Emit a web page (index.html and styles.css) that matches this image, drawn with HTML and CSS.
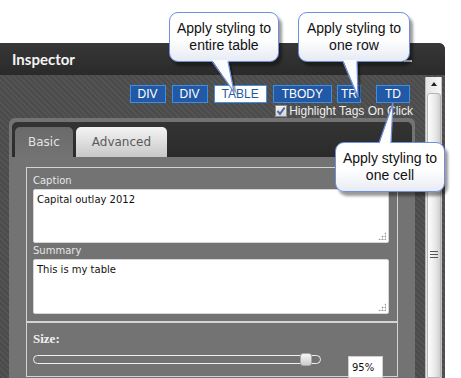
FILE: index.html
```html
<!DOCTYPE html>
<html lang="en">
<head>
  <meta charset="UTF-8">
  <meta name="viewport" content="width=device-width, initial-scale=1.0">
  <title>Inspector</title>
  <link rel="stylesheet" href="styles.css">
</head>
<body>
  <div class="window">
    <!-- Title bar -->
    <div class="window-header">
      <h1>Inspector</h1>
      <span class="minimize"></span>
    </div>

    <div class="window-body">
      <div class="main">
        <!-- Tag path -->
        <div class="tag-path">
          <button class="tag">DIV</button>
          <button class="tag">DIV</button>
          <button class="tag selected">TABLE</button>
          <button class="tag tbody">TBODY</button>
          <button class="tag tr">TR</button>
          <button class="tag td">TD</button>
        </div>
        <label class="highlight-option">
          <span class="checkbox">
            <svg width="10" height="10" viewBox="0 0 10 10"><path d="M1.5 5 L4 7.8 L8.6 1.6" fill="none" stroke="#4b6ca6" stroke-width="2"/></svg>
          </span>
          Highlight Tags On Click
        </label>

        <!-- Tabs panel -->
        <div class="panel">
          <div class="tabs">
            <span class="tab active">Basic</span>
            <span class="tab advanced">Advanced</span>
          </div>
          <div class="tab-content">
            <div class="section">
              <label class="field-label">Caption</label>
              <div class="field">
                <textarea class="caption">Capital outlay 2012</textarea>
                <span class="grip-dots"></span>
              </div>
              <label class="field-label spaced">Summary</label>
              <div class="field">
                <textarea class="summary">This is my table</textarea>
                <span class="grip-dots"></span>
              </div>
            </div>
            <div class="section size-section">
              <h3>Size:</h3>
              <div class="slider-row">
                <div class="slider"><span class="handle"></span></div>
                <input class="size-input" type="text" value="95%">
              </div>
            </div>
          </div>
        </div>
      </div>

      <!-- Scrollbar -->
      <div class="scrollbar">
        <div class="scroll-up"><span class="arrow"></span></div>
        <div class="scroll-thumb"><span class="grip"></span></div>
      </div>
    </div>
  </div>

  <!-- Callouts -->
  <div class="callout callout-table">Apply styling to<br>entire table</div>
  <svg class="tail tail-table" width="40" height="45" viewBox="205 55 40 45">
    <polygon points="215,64 231,64 237,95" fill="rgba(0,0,0,0.35)"/>
    <polygon points="212,60 228,60 234,92" fill="#fafbfd"/>
    <polyline points="212,61.5 234,92 228,61.5" fill="none" stroke="#6f8fdc" stroke-width="1.2"/>
  </svg>

  <div class="callout callout-row">Apply styling to<br>one row</div>
  <svg class="tail tail-row" width="30" height="45" viewBox="335 55 30 45">
    <polygon points="346,64 360,64 361,100" fill="rgba(0,0,0,0.35)"/>
    <polygon points="343,60 357,60 358,97" fill="#fafbfd"/>
    <polyline points="343,61.5 358,97 357,61.5" fill="none" stroke="#6f8fdc" stroke-width="1.2"/>
  </svg>

  <div class="callout callout-cell">Apply styling to<br>one cell</div>
  <svg class="tail tail-cell" width="25" height="45" viewBox="372 100 25 45">
    <polygon points="379,144 391,144 393,103" fill="#fdfdfe"/>
    <polyline points="379,143 393,103 391,143" fill="none" stroke="#6f8fdc" stroke-width="1.2"/>
  </svg>
</body>
</html>
```

FILE: styles.css
```css
/* General styles */
body {
  margin: 0;
  background-color: #fff;
  font-family: "Liberation Sans", Arial, sans-serif;
}

.window {
  margin-top: 43px;
  width: 445px;
  height: 335px;
  background-color: #3a3a3a;
  border-radius: 0 6px 0 0;
  overflow: hidden;
}

/* Title bar */
.window-header {
  display: flex;
  align-items: center;
  height: 32px;
  background: linear-gradient(#373737, #2a2a2a);
  border-radius: 0 6px 0 0;
}

.window-header h1 {
  margin: 0 0 0 12px;
  font-family: Lato, sans-serif;
  font-size: 15px;
  font-weight: bold;
  color: #f4f4f4;
}

.minimize {
  width: 8px;
  height: 2px;
  margin: 4px 33px 0 auto;
  background-color: #ddd;
}

.window-body {
  display: flex;
  height: 303px;
  padding-right: 3px;
  background: repeating-linear-gradient(45deg, #4b4b4b 0, #4b4b4b 2px, #535353 2px, #535353 4px);
}

.main {
  flex: 1;
  padding: 10px 10px 0 9px;
  overflow: hidden;
}

/* Tag path buttons */
.tag-path {
  display: flex;
  justify-content: flex-end;
  gap: 6px;
  margin-right: 5px;
}

.tag {
  height: 18px;
  padding: 0 7px;
  border: 1px solid #3b8fe4;
  background-color: #2159a7;
  color: #fff;
  font-family: "Liberation Sans", Arial, sans-serif;
  font-size: 12px;
  line-height: 16px;
}

.tag.selected {
  background-color: #fff;
  color: #1f5aa8;
}

.tag.tbody {
  padding: 0 8px;
  margin-right: -1px;
}

.tag.tr {
  padding: 0 3px;
}

.tag.td {
  padding: 0 8px;
  margin-left: 9px;
}

.highlight-option {
  display: flex;
  justify-content: flex-end;
  align-items: center;
  gap: 2px;
  height: 14px;
  margin: 1px 2px 0 0;
  color: #efefef;
  font-size: 12px;
  line-height: 14px;
}

.checkbox {
  display: flex;
  align-items: center;
  justify-content: center;
  box-sizing: border-box;
  width: 12px;
  height: 12px;
  border: 1px solid #8c8c8c;
  background: linear-gradient(#f2f2f2, #d6d6d6);
}

/* Tabs panel */
.panel {
  height: 260px;
  padding: 4px 3px 0;
  background-color: #737373;
  border-radius: 6px 6px 0 0;
}

.tabs {
  display: flex;
  align-items: flex-end;
  gap: 3px;
  height: 35px;
  padding-left: 3px;
  background: linear-gradient(#343434, #2b2b2b);
  border-radius: 5px 5px 0 0;
}

.tab {
  height: 30px;
  padding: 0 13px;
  border-radius: 5px 5px 0 0;
  font-family: "DejaVu Sans", sans-serif;
  font-size: 12px;
  line-height: 30px;
}

.tab.active {
  background: linear-gradient(#6a6a6a, #737373);
  color: #e2e2e2;
}

.tab.advanced {
  padding: 0 16px;
  background: linear-gradient(#f4f4f4, #c8c8c8);
  color: #5a5a5a;
}

.tab-content {
  padding: 10px 14px 0;
}

.section {
  padding: 7px 8px 7px 6px;
  border: 1px solid #d4d4d4;
}

.field-label {
  display: block;
  margin-bottom: 2px;
  font-family: "DejaVu Sans", sans-serif;
  font-size: 10px;
  line-height: 12px;
  color: #e6e6e6;
}

.field-label.spaced {
  margin-top: 2px;
}

.field {
  position: relative;
}

textarea {
  display: block;
  box-sizing: border-box;
  width: 100%;
  padding: 4px 3px;
  border: 1px solid #d6d6d6;
  border-radius: 2px;
  background-color: #fff;
  font-family: "DejaVu Sans", sans-serif;
  font-size: 10px;
  line-height: 12px;
  color: #111;
  resize: none;
}

textarea.caption {
  height: 54px;
}

textarea.summary {
  height: 55px;
}

/* dotted resize grip */
.grip-dots {
  position: absolute;
  right: 3px;
  bottom: 3px;
  width: 8px;
  height: 8px;
  background: radial-gradient(circle, #9a9a9a 0.9px, transparent 1.1px) 0 0 / 3px 3px;
  clip-path: polygon(100% 0, 100% 100%, 0 100%);
}

.size-section {
  box-sizing: border-box;
  height: 55px;
  padding-top: 8px;
}

.size-section h3 {
  margin: 0 0 9px;
  font-family: "Liberation Serif", serif;
  font-size: 13px;
  line-height: 15px;
  color: #f2f2f2;
}

.slider-row {
  display: flex;
  align-items: flex-start;
}

.slider {
  position: relative;
  box-sizing: border-box;
  width: 288px;
  height: 9px;
  border: 1px solid #f0f0f0;
  border-radius: 5px;
}

.handle {
  position: absolute;
  left: 266px;
  top: -3px;
  box-sizing: border-box;
  width: 12px;
  height: 13px;
  border: 1px solid #a8a8a8;
  border-radius: 3px;
  background: linear-gradient(#f6f6f6, #cdcdcd);
}

.size-input {
  box-sizing: border-box;
  width: 35px;
  height: 22px;
  margin: 1px 0 0 27px;
  padding: 0 3px;
  border: 1px solid #cfcfcf;
  background-color: #fff;
  font-family: "DejaVu Sans", sans-serif;
  font-size: 10px;
  color: #111;
}

/* Scrollbar */
.scrollbar {
  display: flex;
  flex-direction: column;
  box-sizing: border-box;
  width: 17px;
  margin-top: 2px;
  border-left: 1px solid #b8b8b8;
  border-right: 1px solid #c4c4c4;
  background: linear-gradient(90deg, #e4e4e4, #f6f6f6);
}

.scroll-up {
  display: flex;
  justify-content: center;
  align-items: center;
  height: 14px;
}

.arrow {
  width: 0;
  height: 0;
  border-left: 3.5px solid transparent;
  border-right: 3.5px solid transparent;
  border-bottom: 4px solid #222;
}

.scroll-thumb {
  flex: 1;
  margin: 2px 0 0 1px;
  border: 1px solid #b4b4b4;
  border-radius: 3px 3px 0 0;
  background: linear-gradient(90deg, #fdfdfd, #e9e9e9 60%, #cfcfcf);
}

.grip {
  display: block;
  width: 8px;
  height: 5px;
  margin: 157px 0 0 2px;
  border-top: 1px solid #555;
  border-bottom: 1px solid #555;
  background: linear-gradient(transparent 2px, #555 2px, #555 3px, transparent 3px);
}

/* Callouts */
.callout {
  position: absolute;
  box-sizing: border-box;
  height: 50px;
  padding-top: 7px;
  border: 1px solid #6f8fdc;
  border-radius: 9px;
  background: linear-gradient(#fff 55%, #e6eaf3);
  box-shadow: 3px 4px 3px rgba(0, 0, 0, 0.4);
  font-family: "Liberation Sans", Arial, sans-serif;
  font-size: 14px;
  line-height: 16.5px;
  text-align: center;
  color: #111;
}

.callout-table {
  left: 169px;
  top: 12px;
  width: 110px;
}

.callout-row {
  left: 298px;
  top: 12px;
  width: 112px;
}

.callout-cell {
  left: 335px;
  top: 142px;
  width: 110px;
  background: linear-gradient(#fff 55%, #e8ebf3);
}

.tail {
  position: absolute;
}

.tail-table {
  left: 205px;
  top: 55px;
}

.tail-row {
  left: 335px;
  top: 55px;
}

.tail-cell {
  left: 372px;
  top: 100px;
}
```
